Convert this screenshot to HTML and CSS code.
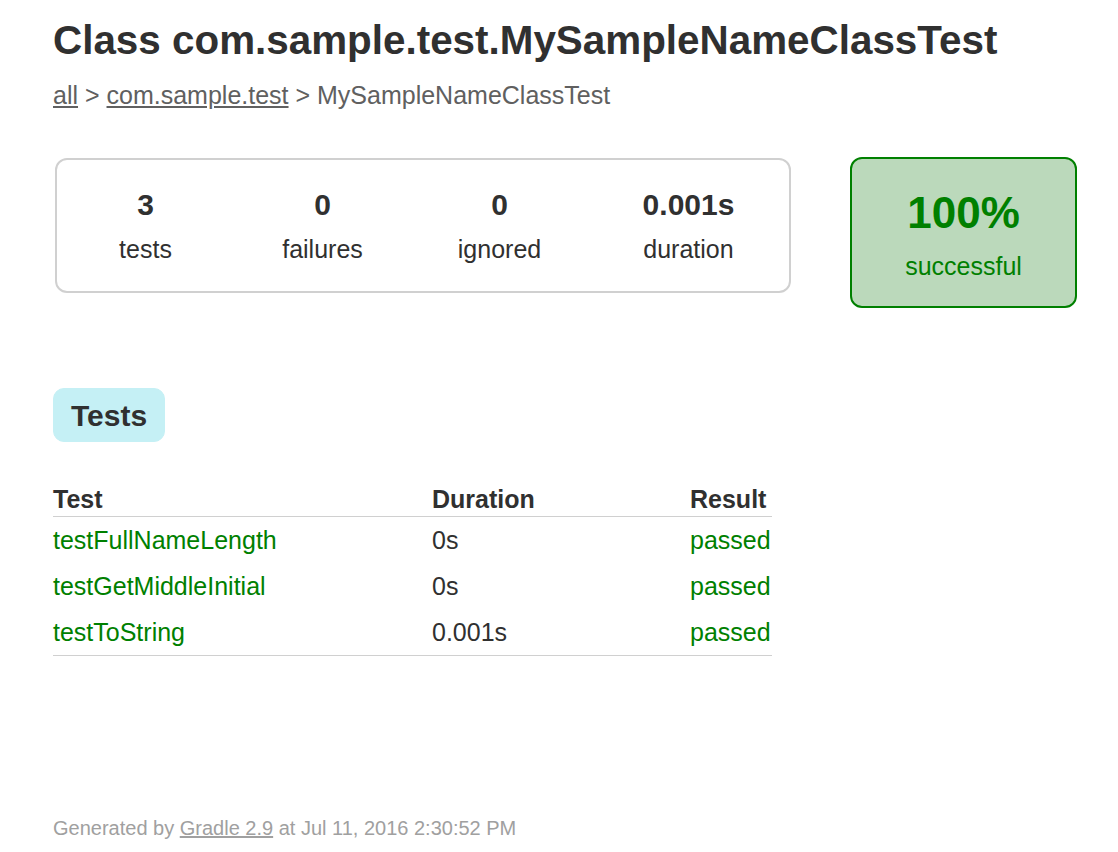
FILE: index.html
```html
<!DOCTYPE html>
<html>
<head>
<meta charset="utf-8">
<title>Test results - Class com.sample.test.MySampleNameClassTest</title>
<link rel="stylesheet" href="styles.css">
</head>
<body>
<div class="content">
  <h1>Class com.sample.test.MySampleNameClassTest</h1>
  <div class="breadcrumbs"><a href="#">all</a> &gt; <a href="#">com.sample.test</a> &gt; MySampleNameClassTest</div>

  <div class="summary">
    <div class="summary-group">
      <div class="info-box">
        <div class="counter">3</div>
        <p>tests</p>
      </div>
      <div class="info-box">
        <div class="counter">0</div>
        <p>failures</p>
      </div>
      <div class="info-box">
        <div class="counter">0</div>
        <p>ignored</p>
      </div>
      <div class="info-box info-box-duration">
        <div class="counter">0.001s</div>
        <p>duration</p>
      </div>
    </div>
    <div class="success-rate">
      <div class="percent">100%</div>
      <p>successful</p>
    </div>
  </div>

  <ul class="tab-links">
    <li class="selected"><h2>Tests</h2></li>
  </ul>

  <table class="tests">
    <thead>
      <tr>
        <th class="col-test">Test</th>
        <th class="col-duration">Duration</th>
        <th class="col-result">Result</th>
      </tr>
    </thead>
    <tbody>
      <tr>
        <td class="success">testFullNameLength</td>
        <td>0s</td>
        <td class="success">passed</td>
      </tr>
      <tr>
        <td class="success">testGetMiddleInitial</td>
        <td>0s</td>
        <td class="success">passed</td>
      </tr>
      <tr>
        <td class="success">testToString</td>
        <td>0.001s</td>
        <td class="success">passed</td>
      </tr>
    </tbody>
  </table>

  <div class="footer">Generated by <a href="#">Gradle 2.9</a> at Jul 11, 2016 2:30:52 PM</div>
</div>
</body>
</html>
```

FILE: styles.css
```css
html, body {
  margin: 0;
  padding: 0;
  background: #ffffff;
}

body {
  font-family: "Liberation Sans", Arial, sans-serif;
  font-size: 25px;
  color: #303030;
}

a, a:visited {
  color: inherit;
}

.content {
  padding: 17px 20px 30px 53px;
}

h1 {
  font-size: 40.4px;
  font-weight: bold;
  margin: 0 0 17px 0;
  white-space: nowrap;
}

.breadcrumbs,
.breadcrumbs a {
  color: #606060;
}

.summary {
  display: flex;
  align-items: flex-start;
  margin-top: 47px;
}

.summary-group {
  display: flex;
  flex-shrink: 0;
  margin: 1px 0 0 2px;
  border: 2px solid #d0d0d0;
  border-radius: 12px;
}

.info-box {
  width: 177px;
  padding: 28px 0 27px 0;
  text-align: center;
}

.info-box-duration {
  width: 201px;
}

.info-box p,
.success-rate p {
  margin: 0;
}

.counter {
  font-size: 30px;
  font-weight: bold;
  margin-bottom: 13px;
}

.success-rate {
  flex-shrink: 0;
  width: 223px;
  margin-left: 59px;
  padding: 29px 0 25px 0;
  text-align: center;
  border: 2px solid #008000;
  border-radius: 12px;
  background: #bbd9bb;
  color: #008000;
}

.percent {
  font-size: 44px;
  font-weight: bold;
  margin-bottom: 14px;
}

.tab-links {
  display: flex;
  list-style: none;
  margin: 80px 0 0 0;
  padding: 0;
}

.tab-links li {
  padding: 10px 17px 8px 17px;
  border: 1px solid #c5f0f5;
  border-radius: 11px;
  background: #c5f0f5;
}

.tab-links h2 {
  margin: 0;
  font-size: 30px;
  font-weight: bold;
  white-space: nowrap;
}

.tests {
  margin-top: 43px;
  width: 719px;
  border-collapse: collapse;
  border-bottom: 1px solid #d0d0d0;
}

.tests th {
  text-align: left;
  white-space: nowrap;
  font-weight: bold;
  padding: 0 0 3px 0;
  line-height: 28px;
  border-bottom: 1px solid #d0d0d0;
}

.col-test {
  width: 379px;
}

.col-duration {
  width: 258px;
}

.tests td {
  white-space: nowrap;
  padding: 9px 0 9px 0;
  line-height: 28px;
}

.success {
  color: #008000;
}

.footer {
  margin-top: 161px;
  font-size: 20px;
  white-space: nowrap;
  color: #a0a0a0;
}

.footer a {
  color: #a0a0a0;
}
```
